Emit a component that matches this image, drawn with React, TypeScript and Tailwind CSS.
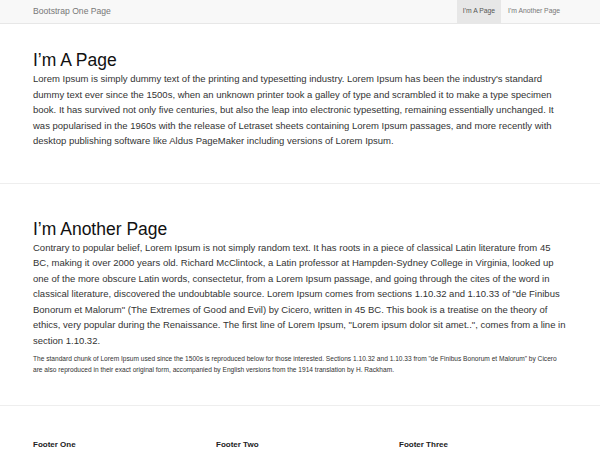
export default function App() {
  return (
    <div className="w-[600px] min-h-[450px] bg-white text-[#333]" style={{ fontFamily: '"Liberation Sans", Arial, sans-serif' }}>
      <nav className="h-[24px] bg-[#f8f8f8] border-b border-[#e7e7e7] flex justify-between items-stretch px-[33px]">
        <div className="flex items-center text-[8.6px] text-[#777]">Bootstrap One Page</div>
        <div className="flex items-stretch text-[6.8px]">
          <div className="flex items-center px-[6px] bg-[#e7e7e7] text-[#555]">I'm A Page</div>
          <div className="flex items-center px-[7px] text-[#777]">I'm Another Page</div>
        </div>
      </nav>
      <section className="px-[33px] pt-[26px] pb-[34px] border-b border-[#eee]">
        <h1 className="text-[17.5px] leading-[21px] text-[#111] font-normal">I’m A Page</h1>
        <p className="text-[9.5px] leading-[15.5px]">
          Lorem Ipsum is simply dummy text of the printing and typesetting industry. Lorem Ipsum has been the industry's standard dummy text ever since the 1500s, when an unknown printer took a galley of type and scrambled it to make a type specimen book. It has survived not only five centuries, but also the leap into electronic typesetting, remaining essentially unchanged. It was popularised in the 1960s with the release of Letraset sheets containing Lorem Ipsum passages, and more recently with desktop publishing software like Aldus PageMaker including versions of Lorem Ipsum.
        </p>
      </section>
      <section className="px-[33px] pt-[35px] pb-[30px] border-b border-[#eee]">
        <h1 className="text-[17.5px] leading-[21px] text-[#111] font-normal">I’m Another Page</h1>
        <p className="text-[9.5px] leading-[15.5px]">
          Contrary to popular belief, Lorem Ipsum is not simply random text. It has roots in a piece of classical Latin literature from 45 BC, making it over 2000 years old. Richard McClintock, a Latin professor at Hampden-Sydney College in Virginia, looked up one of the more obscure Latin words, consectetur, from a Lorem Ipsum passage, and going through the cites of the word in classical literature, discovered the undoubtable source. Lorem Ipsum comes from sections 1.10.32 and 1.10.33 of "de Finibus Bonorum et Malorum" (The Extremes of Good and Evil) by Cicero, written in 45 BC. This book is a treatise on the theory of ethics, very popular during the Renaissance. The first line of Lorem Ipsum, "Lorem ipsum dolor sit amet..", comes from a line in section 1.10.32.
        </p>
        <p className="mt-[5px] text-[6.6px] leading-[11px]">
          The standard chunk of Lorem Ipsum used since the 1500s is reproduced below for those interested. Sections 1.10.32 and 1.10.33 from "de Finibus Bonorum et Malorum" by Cicero are also reproduced in their exact original form, accompanied by English versions from the 1914 translation by H. Rackham.
        </p>
      </section>
      <footer className="px-[33px] pt-[33px]">
        <div className="grid grid-cols-3 w-[549px] text-[8px] leading-[12px] font-bold text-[#222]">
          <div>Footer One</div>
          <div>Footer Two</div>
          <div>Footer Three</div>
        </div>
      </footer>
    </div>
  );
}
